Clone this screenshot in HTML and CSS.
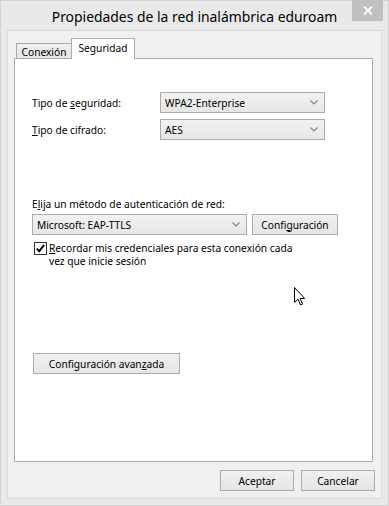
FILE: index.html
```html
<!DOCTYPE html>
<html lang="es">
<head>
<meta charset="utf-8">
<title>Propiedades de la red inalámbrica eduroam</title>
<link rel="stylesheet" href="styles.css">
</head>
<body>
<div class="window">
  <div class="titlebar">
    <div class="title">Propiedades de la red inalámbrica eduroam</div>
    <div class="close">
      <svg width="10" height="9" viewBox="0 0 10 9"><path d="M1 0.5 L9 8.5 M9 0.5 L1 8.5" stroke="#fff" stroke-width="1.8" fill="none"/></svg>
    </div>
  </div>
  <div class="client">
    <div class="tabs">
      <div class="tab">Conexión</div>
      <div class="tab active">Seguridad</div>
    </div>
    <div class="panel">
      <div class="row row-first">
        <div class="label">Tipo de <u>s</u>eguridad:</div>
        <div class="combo">
          <span>WPA2-Enterprise</span>
          <svg class="chev" width="8" height="5" viewBox="0 0 8 5"><path d="M0.5 0.5 L4 4 L7.5 0.5" stroke="#858585" stroke-width="1.2" fill="none"/></svg>
        </div>
      </div>
      <div class="row row-second">
        <div class="label"><u>T</u>ipo de cifrado:</div>
        <div class="combo">
          <span>AES</span>
          <svg class="chev" width="8" height="5" viewBox="0 0 8 5"><path d="M0.5 0.5 L4 4 L7.5 0.5" stroke="#858585" stroke-width="1.2" fill="none"/></svg>
        </div>
      </div>
      <div class="auth-label">E<u>l</u>ija un método de autenticación de red:</div>
      <div class="auth-row">
        <div class="combo combo-wide">
          <span>Microsoft: EAP-TTLS</span>
          <svg class="chev" width="8" height="5" viewBox="0 0 8 5"><path d="M0.5 0.5 L4 4 L7.5 0.5" stroke="#858585" stroke-width="1.2" fill="none"/></svg>
        </div>
        <div class="btn btn-config">Confi<u>g</u>uración</div>
      </div>
      <div class="check-row">
        <span class="checkbox">
          <svg width="11" height="11" viewBox="0 0 11 11"><path d="M1.8 5.6 L4.2 8.2 L9.2 1.8" stroke="#000" stroke-width="1.9" fill="none"/></svg>
        </span>
        <span class="check-text"><u>R</u>ecordar mis credenciales para esta conexión cada<br>vez que inicie sesión</span>
      </div>
      <div class="btn btn-adv">Configuración avan<u>z</u>ada</div>
    </div>
    <div class="footer">
      <div class="btn btn-footer">Aceptar</div>
      <div class="btn btn-footer">Cancelar</div>
    </div>
  </div>
  <svg class="cursor" width="12" height="19" viewBox="0 0 12 19"><path d="M0.5 0.5 L0.5 15.5 L4 12.2 L6.6 18 L8.6 17.1 L6.1 11.5 L10.7 11.5 Z" fill="#fff" stroke="#000" stroke-width="1" stroke-linejoin="miter"/></svg>
</div>
</body>
</html>
```
FILE: styles.css
```css
html, body {
  margin: 0;
  padding: 0;
  background: #e8e8e8;
}
body {
  width: 389px;
  height: 506px;
  overflow: hidden;
  font-family: "Noto Sans", "Open Sans", sans-serif;
  font-size: 10.2px;
  color: #000;
}
u {
  text-decoration: underline;
  text-underline-offset: 1px;
}
.window {
  position: relative;
  box-sizing: border-box;
  width: 389px;
  height: 506px;
  border: 1px solid #d2d2d2;
  background: #e9e9e9;
  padding: 0 6px 6px 6px;
  display: flex;
  flex-direction: column;
}
.titlebar {
  height: 29px;
  display: flex;
  align-items: center;
  justify-content: center;
  flex: none;
}
.title {
  font-size: 13.9px;
  color: #000;
  margin-top: 1px;
}
.close {
  position: absolute;
  top: -1px;
  right: 5px;
  width: 31px;
  height: 21px;
  background: #c0c0c0;
  display: flex;
  align-items: center;
  justify-content: center;
}
.client {
  flex: 1;
  border: 1px solid #dadada;
  background: #f0f0f0;
  padding: 7px 6px 7px 6px;
  display: flex;
  flex-direction: column;
  min-height: 0;
}
.tabs {
  display: flex;
  align-items: flex-end;
  height: 20px;
  padding-left: 2px;
  flex: none;
  position: relative;
  z-index: 2;
}
.tab {
  box-sizing: border-box;
  height: 15px;
  width: 56px;
  border: 1px solid #acacac;
  border-bottom: none;
  background: linear-gradient(#f0f0f0, #e5e5e5);
  display: flex;
  align-items: center;
  justify-content: center;
  padding-top: 1px;
}
.tab.active {
  width: 64px;
  height: 21px;
  margin-left: -1px;
  margin-bottom: -1px;
  background: #fff;
  align-items: flex-start;
  padding-top: 2px;
}
.panel {
  flex: 1;
  border: 1px solid #acacac;
  background: #fff;
  margin-right: 2px;
  padding-left: 17px;
  display: flex;
  flex-direction: column;
  align-items: flex-start;
}
.row {
  display: flex;
  align-items: center;
  height: 21px;
}
.row-first {
  margin-top: 33px;
}
.row-second {
  margin-top: 6px;
}
.label {
  width: 128px;
}
.combo {
  box-sizing: border-box;
  width: 165px;
  height: 21px;
  border: 1px solid #acacac;
  background: linear-gradient(#f2f2f2, #e6e6e6);
  display: flex;
  align-items: center;
  justify-content: space-between;
  padding: 0 6px 0 4px;
}
.combo-wide {
  width: 215px;
}
.chev {
  display: block;
}
.auth-label {
  margin-top: 57px;
  line-height: 15px;
}
.auth-row {
  display: flex;
  margin-top: 2px;
}
.btn {
  box-sizing: border-box;
  height: 21px;
  border: 1px solid #acacac;
  background: linear-gradient(#f0f0f0, #e5e5e5);
  display: flex;
  align-items: center;
  justify-content: center;
}
.btn-config {
  width: 86px;
  margin-left: 5px;
}
.check-row {
  display: flex;
  align-items: flex-start;
  margin-top: 7px;
  margin-left: 2px;
}
.checkbox {
  box-sizing: border-box;
  width: 13px;
  height: 13px;
  border: 1px solid #333;
  background: #fff;
  display: flex;
  align-items: center;
  justify-content: center;
  flex: none;
}
.checkbox svg {
  display: block;
}
.check-text {
  margin-left: 2px;
  line-height: 13px;
}
.btn-adv {
  width: 147px;
  margin-top: 85px;
  margin-left: 1px;
}
.footer {
  display: flex;
  justify-content: flex-end;
  gap: 7px;
  margin-top: 8px;
  flex: none;
}
.btn-footer {
  width: 74px;
}
.cursor {
  position: absolute;
  left: 293px;
  top: 286px;
}
```
